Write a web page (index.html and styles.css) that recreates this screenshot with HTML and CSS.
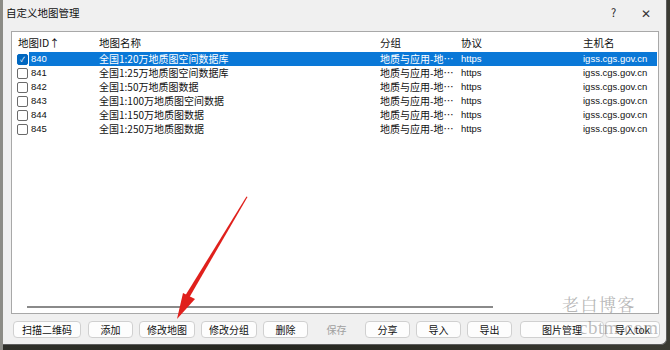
FILE: index.html
```html
<!DOCTYPE html>
<html lang="zh-CN">
<head>
    <meta charset="UTF-8">
    <title>自定义地图管理</title>
    <link rel="stylesheet" href="styles.css">
</head>
<body>
    <div class="escritorio">
        <div class="dialogo">
            <div class="barra-titulo">
                <span class="titulo">自定义地图管理</span>
                <span class="ayuda">?</span>
                <span class="cerrar">✕</span>
            </div>
            <div class="lista">
                <div class="fila cabecera">
                    <span class="col-id">地图ID↑</span>
                    <span>地图名称</span>
                    <span>分组</span>
                    <span>协议</span>
                    <span>主机名</span>
                </div>
                <div class="fila seleccionada">
                    <span class="col-id"><i class="casilla marcada">✓</i><b>840</b></span>
                    <span>全国1:20万地质图空间数据库</span>
                    <span>地质与应用-地…</span>
                    <span class="latino">https</span>
                    <span class="latino">igss.cgs.gov.cn</span>
                </div>
                <div class="fila">
                    <span class="col-id"><i class="casilla"></i><b>841</b></span>
                    <span>全国1:25万地质图空间数据库</span>
                    <span>地质与应用-地…</span>
                    <span class="latino">https</span>
                    <span class="latino">igss.cgs.gov.cn</span>
                </div>
                <div class="fila">
                    <span class="col-id"><i class="casilla"></i><b>842</b></span>
                    <span>全国1:50万地质图数据</span>
                    <span>地质与应用-地…</span>
                    <span class="latino">https</span>
                    <span class="latino">igss.cgs.gov.cn</span>
                </div>
                <div class="fila">
                    <span class="col-id"><i class="casilla"></i><b>843</b></span>
                    <span>全国1:100万地质图空间数据</span>
                    <span>地质与应用-地…</span>
                    <span class="latino">https</span>
                    <span class="latino">igss.cgs.gov.cn</span>
                </div>
                <div class="fila">
                    <span class="col-id"><i class="casilla"></i><b>844</b></span>
                    <span>全国1:150万地质图数据</span>
                    <span>地质与应用-地…</span>
                    <span class="latino">https</span>
                    <span class="latino">igss.cgs.gov.cn</span>
                </div>
                <div class="fila">
                    <span class="col-id"><i class="casilla"></i><b>845</b></span>
                    <span>全国1:250万地质图数据</span>
                    <span>地质与应用-地…</span>
                    <span class="latino">https</span>
                    <span class="latino">igss.cgs.gov.cn</span>
                </div>
                <div class="relleno"></div>
                <div class="desplazamiento"><div class="pulgar"></div></div>
            </div>
            <div class="botones">
                <button class="b-ancho">扫描二维码</button>
                <button>添加</button>
                <button class="b-medio">修改地图</button>
                <button class="b-medio">修改分组</button>
                <button>删除</button>
                <button class="inactivo">保存</button>
                <button>分享</button>
                <button>导入</button>
                <button>导出</button>
                <button class="b-imagen">图片管理</button>
                <button class="b-tok">导入tok</button>
            </div>
            <div class="marca">老白博客</div>
            <div class="marca-url">cbtm.com</div>
            <svg class="flecha" width="120" height="150" viewBox="0 0 120 150">
                <polygon points="104.5,10.5 105.5,11 47,112 43,110" fill="#e0201c"/>
                <polygon points="35,133 53,113 41,107" fill="#e0201c"/>
            </svg>
        </div>
    </div>
</body>
</html>
```

FILE: styles.css
```css
body {
    margin: 0;
    font-family: "Noto Sans CJK SC", "Noto Sans", sans-serif;
    font-size: 10px;
    color: #111;
}

.escritorio {
    width: 670px;
    height: 350px;
    background: linear-gradient(90deg, #8c8c86 0, #8c8c86 3px, #2f302a 3px, #25261f 40%, #3b3b33);
    overflow: hidden;
}

.dialogo {
    position: relative;
    margin-left: 3px;
    width: 663px;
    height: 344px;
    background: #f0f0f0;
    border-right: 1px solid #5d5d5d;
    border-bottom: 1px solid #5d5d5d;
    border-radius: 0 0 6px 0;
    display: flex;
    flex-direction: column;
}

.barra-titulo {
    height: 24px;
    display: flex;
    align-items: center;
    padding: 0 0 0 3px;
    font-size: 10.5px;
}

.titulo {
    flex: 1;
}

.ayuda {
    width: 30px;
    font-size: 11px;
    color: #222;
}

.cerrar {
    width: 25px;
    font-size: 12px;
    color: #333;
}

.lista {
    margin: 7px 7px 0 8px;
    height: 281px;
    background: #fff;
    border: 1px solid #a8a8a8;
    display: flex;
    flex-direction: column;
    padding: 0 1px 0 4px;
}

.fila {
    display: grid;
    grid-template-columns: 83px 281px 81px 122px 1fr;
    height: 14px;
    line-height: 14px;
    white-space: nowrap;
}

.fila span {
    overflow: hidden;
}

.cabecera {
    height: 20px;
    line-height: 21px;
    font-size: 10.5px;
}

.cabecera span:first-child {
    padding-left: 2px;
}

.col-id {
    display: flex;
    align-items: center;
}

.col-id b {
    font-weight: normal;
    font-family: "Liberation Sans", sans-serif;
    font-size: 9.5px;
    padding-left: 2px;
    flex: 1;
    height: 14px;
}

.casilla {
    width: 9px;
    height: 9px;
    border: 1px solid #6a6a6a;
    border-radius: 2px;
    margin: 0 1px 0 1px;
    font-style: normal;
    font-size: 7px;
    line-height: 9px;
    text-align: center;
    color: #fff;
}

.casilla.marcada {
    background: #0067c0;
    border-color: #0067c0;
}

.latino {
    font-family: "Liberation Sans", sans-serif;
    font-size: 9.5px;
}

.seleccionada span:not(.col-id),
.seleccionada .col-id b {
    background: #0a78d7;
    color: #fff;
}

.relleno {
    flex: 1;
}

.desplazamiento {
    height: 12px;
    display: flex;
    align-items: center;
    padding-left: 11px;
    margin-bottom: 0;
}

.pulgar {
    width: 466px;
    height: 2px;
    background: #8a8a8a;
}

.botones {
    display: flex;
    gap: 6px;
    padding: 7px 0 0 10px;
}

.botones button {
    width: 45px;
    height: 17px;
    padding: 0;
    font-family: "Noto Sans CJK SC", sans-serif;
    font-size: 10px;
    line-height: 15px;
    color: #111;
    background: #fdfdfd;
    border: 1px solid #d0d0d0;
    border-radius: 4px;
}

.botones .b-ancho {
    width: 68px;
    margin-right: 1px;
}

.botones .b-medio {
    width: 56px;
}

.botones .b-imagen {
    width: 84px;
    margin-left: 2px;
}

.botones .b-tok {
    width: 55px;
    margin-left: -5px;
}

.botones .inactivo {
    color: #a0a0a0;
    background: #f0f0f0;
    border-color: #f0f0f0;
}

.marca {
    position: absolute;
    left: 559px;
    top: 291px;
    font-family: "Noto Serif CJK SC", "Liberation Serif", serif;
    font-size: 17px;
    letter-spacing: 1.5px;
    color: rgba(110, 110, 110, 0.5);
}

.marca-url {
    position: absolute;
    left: 576px;
    top: 317px;
    font-family: "Liberation Serif", serif;
    font-size: 19px;
    letter-spacing: 0.5px;
    color: rgba(110, 110, 110, 0.45);
}

.flecha {
    position: absolute;
    left: 139px;
    top: 186px;
}
```
